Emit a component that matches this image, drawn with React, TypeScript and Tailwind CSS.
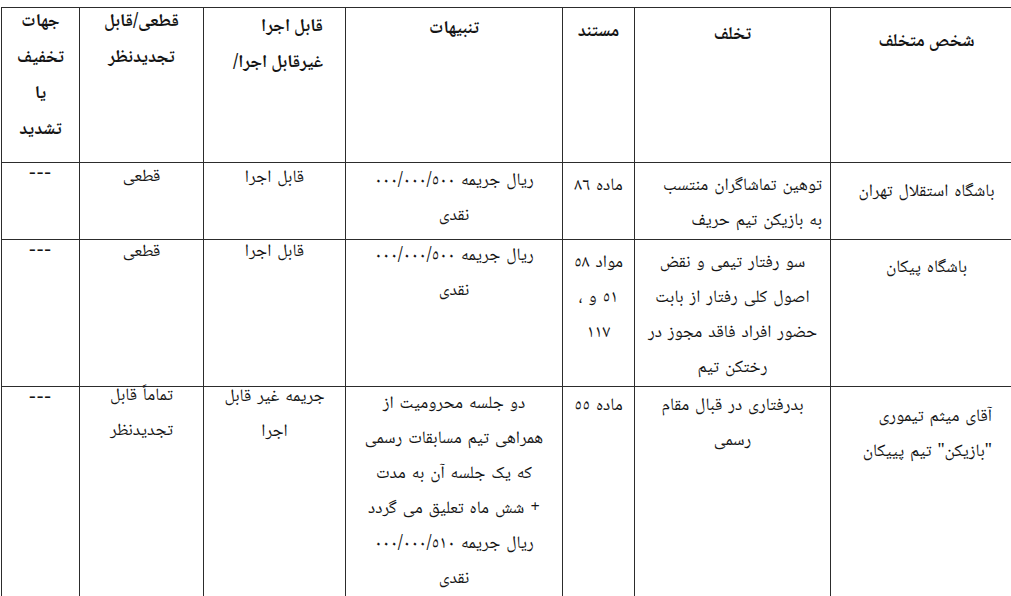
import { Fragment, ReactNode } from 'react';

// scanned ruling table; the scan is skewed, so text sits lower towards the right
const cell = 'border-[1.5px] border-[#2c2c2c] align-top text-center px-1 p-0';
const head = `${cell} font-bold text-[18px] leading-[36px]`;
const body = `${cell} text-[17.5px] leading-[35px] [word-spacing:2px]`;
const dash = `${cell} text-[20px] leading-[30px] tracking-[1px] font-['Liberation_Serif',serif]`;

// number whose slash groups run right to left, as in the scan
function Amount({ value }: { value: string }) {
  const groups = value.split('/');
  return (
    <bdi dir="rtl">
      {groups.map((g, i) => (
        <Fragment key={i}>
          {i > 0 && '/'}
          <bdi>{g}</bdi>
        </Fragment>
      ))}
    </bdi>
  );
}

function Ltr({ children }: { children: ReactNode }) {
  return <span dir="ltr" className="inline-block">{children}</span>;
}

function Fine({ value }: { value: string }) {
  return (
    <Ltr>
      <Amount value={value} /> <bdi>ریال جریمه</bdi>
    </Ltr>
  );
}

function Cell({ cls, shift, lines }: { cls: string; shift: string; lines: ReactNode[] }) {
  return (
    <td className={cls}>
      <div className={shift}>
        {lines.map((t, i) => (
          <div key={i}>{t}</div>
        ))}
      </div>
    </td>
  );
}

export default function App() {
  return (
    <div className="w-[1011px] h-[596px] overflow-hidden bg-white text-[#141414] font-['Noto_Naskh_Arabic','Noto_Sans_Arabic','DejaVu_Sans',sans-serif]">
      <table dir="rtl" className="ml-[1px] mt-[7px] w-[1021px] table-fixed border-collapse">
        <colgroup>
          <col className="w-[192px]" />
          <col className="w-[196px]" />
          <col className="w-[72px]" />
          <col className="w-[217px]" />
          <col className="w-[142px]" />
          <col className="w-[124px]" />
          <col className="w-[78px]" />
        </colgroup>
        <tbody>
          <tr className="h-[155px]">
            <Cell cls={head} shift="mt-[16px]" lines={['شخص متخلف']} />
            <Cell cls={head} shift="mt-[9px]" lines={['تخلف']} />
            <Cell cls={head} shift="mt-[6px]" lines={['مستند']} />
            <Cell cls={head} shift="mt-[3px]" lines={['تنبیهات']} />
            <Cell
              cls={`${head} text-right pr-[22px]`}
              shift="mt-[1px]"
              lines={['قابل اجرا', <Ltr key="l">/<bdi>غیرقابل اجرا</bdi></Ltr>]}
            />
            <Cell cls={head} shift="-mt-[4px]" lines={['قطعی/قابل', 'تجدیدنظر']} />
            <Cell cls={head} shift="-mt-[4px]" lines={['جهات', 'تخفیف', 'یا', 'تشدید']} />
          </tr>

          <tr className="h-[70px]">
            <Cell cls={body} shift="mt-[12px]" lines={['باشگاه استقلال تهران']} />
            <Cell
              cls={`${body} text-right pr-[8px]`}
              shift="mt-[6px]"
              lines={['توهین تماشاگران منتسب', 'به بازیکن تیم حریف']}
            />
            <Cell cls={body} shift="mt-[6px]" lines={['ماده ٨٦']} />
            <Cell cls={body} shift="mt-[1px]" lines={[<Fine key="f" value="٥٠٠/٠٠٠/٠٠٠" />, 'نقدی']} />
            <Cell cls={body} shift="-mt-[2px]" lines={['قابل اجرا']} />
            <Cell cls={body} shift="-mt-[3px]" lines={['قطعی']} />
            <Cell cls={dash} shift="-mt-[7px]" lines={['---']} />
          </tr>

          <tr className="h-[147px]">
            <Cell cls={body} shift="mt-[11px]" lines={['باشگاه پیکان']} />
            <Cell
              cls={body}
              shift="mt-[6px]"
              lines={['سو رفتار تیمی  و نقض', 'اصول کلی رفتار از بابت', 'حضور افراد فاقد مجوز در', 'رختکن تیم']}
            />
            <Cell
              cls={body}
              shift="mt-[6px]"
              lines={['مواد ٥٨', <Ltr key="c">، <bdi>٥١ و</bdi></Ltr>, '١١٧']}
            />
            <Cell cls={body} shift="-mt-[1px]" lines={[<Fine key="f" value="٥٠٠/٠٠٠/٠٠٠" />, 'نقدی']} />
            <Cell cls={body} shift="-mt-[5px]" lines={['قابل اجرا']} />
            <Cell cls={body} shift="-mt-[5px]" lines={['قطعی']} />
            <Cell cls={dash} shift="-mt-[7px]" lines={['---']} />
          </tr>

          <tr className="h-[220px]">
            <Cell
              cls={`${body} text-right pr-[30px]`}
              shift="mt-[13px]"
              lines={['آقای میثم تیموری', '"بازیکن" تیم پییکان']}
            />
            <Cell cls={body} shift="mt-[2px]" lines={['بدرفتاری در قبال مقام', 'رسمی']} />
            <Cell cls={body} shift="mt-[2px]" lines={['ماده ٥٥']} />
            <Cell
              cls={body}
              shift="mt-0"
              lines={[
                'دو جلسه محرومیت از',
                'همراهی تیم مسابقات رسمی',
                'که یک جلسه آن به مدت',
                <Ltr key="p">
                  <bdi>شش ماه تعلیق می گردد</bdi> +
                </Ltr>,
                <Fine key="f" value="٥١٠/٠٠٠/٠٠٠" />,
                'نقدی',
              ]}
            />
            <Cell cls={body} shift="-mt-[7px]" lines={['جریمه غیر قابل', 'اجرا']} />
            <Cell cls={body} shift="-mt-[8px]" lines={['تماماً قابل', 'تجدیدنظر']} />
            <Cell cls={dash} shift="-mt-[7px]" lines={['---']} />
          </tr>
        </tbody>
      </table>
    </div>
  );
}
